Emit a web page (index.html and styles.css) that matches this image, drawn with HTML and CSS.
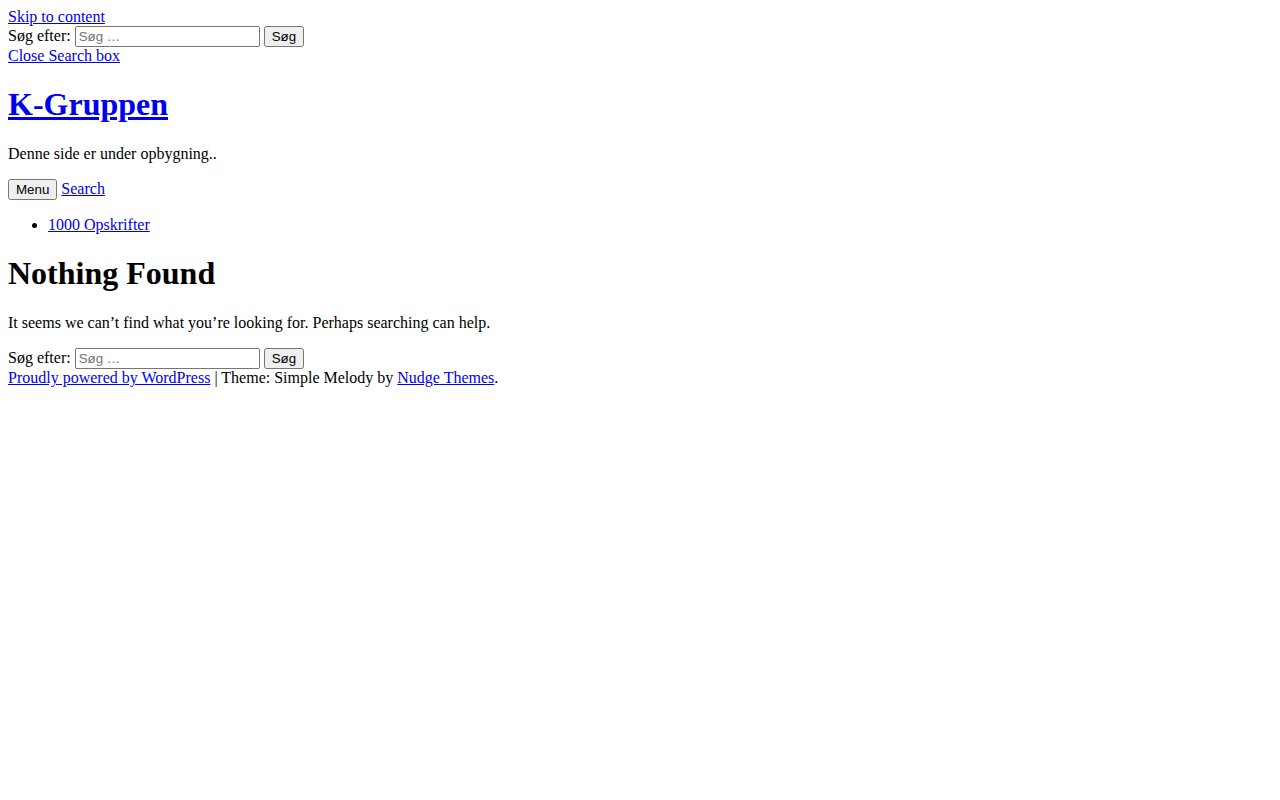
FILE: index.html
```html
<!DOCTYPE html>
<html lang="da">
<head>
    <meta charset="UTF-8">
    <meta name="viewport" content="width=device-width, initial-scale=1.0">
    <title>Nothing Found – K-Gruppen</title>
    <link rel="stylesheet" href="styles.css">
</head>
<body>
    <div class="site">
        <a class="skip-link" href="#content">Skip to content</a>

        <div class="header-search">
            <form class="search-form" role="search">
                <label>
                    <span class="screen-reader-text">Søg efter:</span>
                    <input type="search" class="search-field" placeholder="Søg …" name="s">
                </label>
                <input type="submit" class="search-submit" value="Søg">
            </form>
            <a href="#" class="close-search">Close Search box</a>
        </div>

        <header class="site-header">
            <div class="site-branding">
                <h1 class="site-title"><a href="#">K-Gruppen</a></h1>
                <p class="site-description">Denne side er under opbygning..</p>
            </div>

            <nav class="main-navigation">
                <button class="menu-toggle">Menu</button>
                <a href="#" class="search-toggle">Search</a>
                <ul class="menu">
                    <li><a href="#">1000 Opskrifter</a></li>
                </ul>
            </nav>
        </header>

        <main id="content" class="site-main">
            <section class="no-results">
                <header class="page-header">
                    <h1 class="page-title">Nothing Found</h1>
                </header>
                <div class="page-content">
                    <p>It seems we can&rsquo;t find what you&rsquo;re looking for. Perhaps searching can help.</p>
                    <form class="search-form" role="search">
                        <label>
                            <span class="screen-reader-text">Søg efter:</span>
                            <input type="search" class="search-field" placeholder="Søg …" name="s">
                        </label>
                        <input type="submit" class="search-submit" value="Søg">
                    </form>
                </div>
            </section>
        </main>

        <footer class="site-footer">
            <div class="site-info">
                <a href="#">Proudly powered by WordPress</a>
                <span class="sep"> | </span>
                Theme: Simple Melody by <a href="#">Nudge Themes</a>.
            </div>
        </footer>
    </div>
</body>
</html>
```

FILE: styles.css
```css
body {
    font-family: "Liberation Serif", "Times New Roman", serif;
    font-size: 16px;
    color: #000;
    background: #fff;
}

a {
    color: #0000ee;
}

.skip-link {
    display: block;
}

.search-form {
    margin: 0;
}

.search-field {
    font-family: "Liberation Sans", Arial, sans-serif;
    font-size: 13.33px;
}

.search-submit {
    font-family: "Liberation Sans", Arial, sans-serif;
    font-size: 13.33px;
}

.site-title {
    font-size: 2em;
    margin: 0.67em 0;
}

.page-title {
    font-size: 2em;
    margin: 0.67em 0;
}

.menu-toggle {
    font-family: "Liberation Sans", Arial, sans-serif;
    font-size: 13.33px;
}

.menu {
    padding-left: 40px;
    margin: 16px 0;
}
```
